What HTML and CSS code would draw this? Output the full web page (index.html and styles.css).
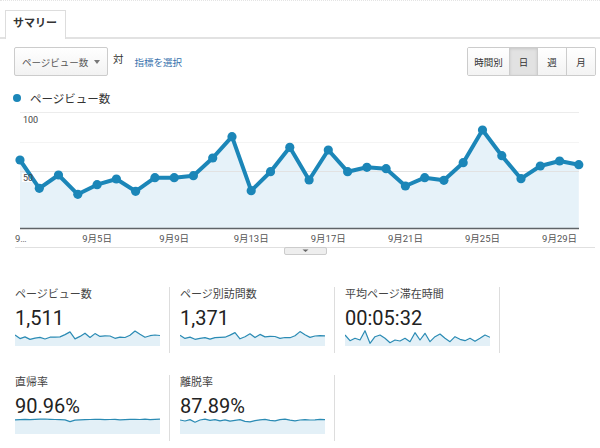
FILE: index.html
```html
<!DOCTYPE html>
<html lang="ja">
<head>
  <meta charset="UTF-8">
  <title>サマリー</title>
  <link rel="stylesheet" href="styles.css">
</head>
<body>
  <div class="tabs">
    <div class="tab">サマリー</div>
  </div>

  <div class="toolbar">
    <div class="metric-select">ページビュー数<span class="caret"></span></div>
    <span class="versus">対</span>
    <a class="pick-metric" href="#">指標を選択</a>
    <div class="period-group">
      <button class="hourly">時間別</button><button class="active">日</button><button>週</button><button>月</button>
    </div>
  </div>

  <div class="legend"><span class="dot"></span>ページビュー数</div>

  <!-- main chart, drawn in page coordinates through the viewBox -->
  <svg class="chart" width="600" height="152" viewBox="0 106 600 152">
    <defs>
      <marker id="pt" markerUnits="userSpaceOnUse" markerWidth="12" markerHeight="12" refX="6" refY="6">
        <circle cx="6" cy="6" r="4.6" fill="#1b86b8"/>
      </marker>
    </defs>
    <line class="grid" x1="20" y1="112.5" x2="579" y2="112.5"/>
    <line class="grid light" x1="20" y1="142.5" x2="579" y2="142.5"/>
    <polygon class="area" points="20,160 39.3,188.3 58.5,175 77.8,194.3 97.1,184.7 116.4,179 135.6,191.3 154.9,177.7 174.2,177.7 193.4,175.7 212.7,158 232,136.7 251.2,190.7 270.5,171.7 289.8,147.3 309.1,180 328.3,150 347.6,171.7 366.9,167.3 386.1,168.7 405.4,186 424.7,177.7 443.9,180.3 463.2,162.7 482.5,130 501.8,155.7 521,178.7 540.3,166 559.6,161 578.8,164.7 578.8,228 20,228"/>
    <line class="grid mid" x1="20" y1="171.5" x2="579" y2="171.5"/>
    <text class="axis-y" x="23" y="122.5">100</text>
    <rect x="22" y="173" width="12" height="9" fill="#fff" fill-opacity="0.85"/>
    <polyline class="line" marker-start="url(#pt)" marker-mid="url(#pt)" marker-end="url(#pt)" points="20,160 39.3,188.3 58.5,175 77.8,194.3 97.1,184.7 116.4,179 135.6,191.3 154.9,177.7 174.2,177.7 193.4,175.7 212.7,158 232,136.7 251.2,190.7 270.5,171.7 289.8,147.3 309.1,180 328.3,150 347.6,171.7 366.9,167.3 386.1,168.7 405.4,186 424.7,177.7 443.9,180.3 463.2,162.7 482.5,130 501.8,155.7 521,178.7 540.3,166 559.6,161 578.8,164.7"/>
    <text class="axis-y" x="23" y="180.5">50</text>
    <line class="axis" x1="20" y1="228.5" x2="579" y2="228.5"/>
    <text class="axis-x" x="15" y="241.5">9…</text>
    <text class="axis-x" x="97.1" y="241.5" text-anchor="middle">9月5日</text>
    <text class="axis-x" x="174.2" y="241.5" text-anchor="middle">9月9日</text>
    <text class="axis-x" x="251.2" y="241.5" text-anchor="middle">9月13日</text>
    <text class="axis-x" x="328.3" y="241.5" text-anchor="middle">9月17日</text>
    <text class="axis-x" x="405.4" y="241.5" text-anchor="middle">9月21日</text>
    <text class="axis-x" x="482.5" y="241.5" text-anchor="middle">9月25日</text>
    <text class="axis-x" x="559.6" y="241.5" text-anchor="middle">9月29日</text>
    <line class="foot" x1="15" y1="247.5" x2="595" y2="247.5"/>
    <!-- collapse handle -->
    <rect class="handle" x="284.5" y="247.5" width="42" height="7" rx="1.5"/>
    <polygon points="302.5,249.5 308.5,249.5 305.5,252" fill="#666"/>
  </svg>

  <div class="stats">
    <div class="stat">
      <div class="stat-name">ページビュー数</div>
      <div class="stat-value">1,511</div>
      <svg class="spark" viewBox="0 0 145 16">
        <polygon class="spark-area" points="0,4.9 5,8.6 10,6.9 15,9.4 20,8.1 25,7.4 30,9 35,7.2 40,7.2 45,6.9 50,4.6 55,1.9 60,8.9 65,6.4 70,3.2 75,7.5 80,3.6 85,6.4 90,5.8 95,6 100,8.3 105,7.2 110,7.5 115,5.3 120,1 125,4.3 130,7.3 135,5.7 140,5 145,5.5 145,16 0,16"/>
        <polyline class="spark-line" points="0,4.9 5,8.6 10,6.9 15,9.4 20,8.1 25,7.4 30,9 35,7.2 40,7.2 45,6.9 50,4.6 55,1.9 60,8.9 65,6.4 70,3.2 75,7.5 80,3.6 85,6.4 90,5.8 95,6 100,8.3 105,7.2 110,7.5 115,5.3 120,1 125,4.3 130,7.3 135,5.7 140,5 145,5.5"/>
      </svg>
    </div>
    <div class="stat">
      <div class="stat-name">ページ別訪問数</div>
      <div class="stat-value">1,371</div>
      <svg class="spark" viewBox="0 0 145 16">
        <polygon class="spark-area" points="0,5.2 5,8.4 10,7.1 15,9.3 20,8.3 25,7.6 30,9.1 35,7.6 40,7.4 45,7.2 50,5.1 55,2.6 60,8.8 65,6.8 70,3.8 75,7.6 80,4.4 85,6.9 90,6.3 95,6.5 100,8.4 105,7.5 110,7.7 115,5.8 120,1.6 125,4.8 130,7.4 135,6 140,5.6 145,5.8 145,16 0,16"/>
        <polyline class="spark-line" points="0,5.2 5,8.4 10,7.1 15,9.3 20,8.3 25,7.6 30,9.1 35,7.6 40,7.4 45,7.2 50,5.1 55,2.6 60,8.8 65,6.8 70,3.8 75,7.6 80,4.4 85,6.9 90,6.3 95,6.5 100,8.4 105,7.5 110,7.7 115,5.8 120,1.6 125,4.8 130,7.4 135,6 140,5.6 145,5.8"/>
      </svg>
    </div>
    <div class="stat">
      <div class="stat-name">平均ページ滞在時間</div>
      <div class="stat-value">00:05:32</div>
      <svg class="spark" viewBox="0 0 145 16">
        <polygon class="spark-area" points="0,5 5,10.7 10,8.3 15,10 20,0.7 25,13.3 30,6.7 35,5 40,8.3 45,12.7 50,10 55,11 60,8.3 65,11.7 70,2.7 75,10 80,3.3 85,11.7 90,6.7 95,4 100,8.3 105,11.7 110,6.7 115,9.3 120,10.7 125,8.3 130,11.3 135,8.3 140,5 145,7.3 145,16 0,16"/>
        <polyline class="spark-line" points="0,5 5,10.7 10,8.3 15,10 20,0.7 25,13.3 30,6.7 35,5 40,8.3 45,12.7 50,10 55,11 60,8.3 65,11.7 70,2.7 75,10 80,3.3 85,11.7 90,6.7 95,4 100,8.3 105,11.7 110,6.7 115,9.3 120,10.7 125,8.3 130,11.3 135,8.3 140,5 145,7.3"/>
      </svg>
    </div>
    <div class="stat">
      <div class="stat-name">直帰率</div>
      <div class="stat-value">90.96%</div>
      <svg class="spark" viewBox="0 0 145 16">
        <polygon class="spark-area" points="0,1.8 5,1.6 10,1.3 15,1.6 20,1.4 25,1.2 30,1 35,1.3 40,1.5 45,1.7 50,1.9 55,3.6 60,2.1 65,1.8 70,1.6 75,1.5 80,1.3 85,1.4 90,1.6 95,1.5 100,1.3 105,1.8 110,1.6 115,1.4 120,1.3 125,1.5 130,1.2 135,1.6 140,1.4 145,1.2 145,16 0,16"/>
        <polyline class="spark-line" points="0,1.8 5,1.6 10,1.3 15,1.6 20,1.4 25,1.2 30,1 35,1.3 40,1.5 45,1.7 50,1.9 55,3.6 60,2.1 65,1.8 70,1.6 75,1.5 80,1.3 85,1.4 90,1.6 95,1.5 100,1.3 105,1.8 110,1.6 115,1.4 120,1.3 125,1.5 130,1.2 135,1.6 140,1.4 145,1.2"/>
      </svg>
    </div>
    <div class="stat">
      <div class="stat-name">離脱率</div>
      <div class="stat-value">87.89%</div>
      <svg class="spark" viewBox="0 0 145 16">
        <polygon class="spark-area" points="0,2 5,3 10,1.6 15,4.2 20,2 25,1.2 30,2.4 35,1.6 40,2.8 45,1.8 50,3.2 55,2.4 60,1.6 65,3.4 70,3.8 75,2.6 80,1.8 85,1.4 90,2.4 95,2.8 100,1.6 105,1.2 110,2.2 115,2.8 120,2 125,1.6 130,2 135,1.8 140,1.4 145,1.6 145,16 0,16"/>
        <polyline class="spark-line" points="0,2 5,3 10,1.6 15,4.2 20,2 25,1.2 30,2.4 35,1.6 40,2.8 45,1.8 50,3.2 55,2.4 60,1.6 65,3.4 70,3.8 75,2.6 80,1.8 85,1.4 90,2.4 95,2.8 100,1.6 105,1.2 110,2.2 115,2.8 120,2 125,1.6 130,2 135,1.8 140,1.4 145,1.6"/>
      </svg>
    </div>
  </div>
</body>
</html>
```

FILE: styles.css
```css
* {
  box-sizing: border-box;
  margin: 0;
  padding: 0;
}
body {
  font-family: Roboto, "Noto Sans CJK JP", sans-serif;
  background: #fff;
  color: #333;
  width: 600px;
  border-top: 1px dotted #e4e4e4;
}

/* Tab strip */
.tabs {
  height: 38px;
  padding: 9px 0 0 5px;
  border-bottom: 2px solid #e2e2e2;
}
.tab {
  display: inline-block;
  height: 29px;
  padding: 0 8px 0 7px;
  line-height: 26px;
  font-size: 11px;
  font-weight: bold;
  color: #333;
  background: #fff;
  border: 1px solid #ddd;
  border-bottom: none;
}

/* Metric picker + period buttons */
.toolbar {
  display: flex;
  align-items: center;
  height: 29px;
  margin-top: 8px;
  padding: 0 4px 0 14px;
}
.metric-select {
  display: flex;
  align-items: center;
  justify-content: space-between;
  width: 94px;
  height: 29px;
  padding: 0 7px 0 7px;
  font-size: 9.5px;
  color: #555;
  background: linear-gradient(#fff, #f2f2f2);
  border: 1px solid #ccc;
  border-radius: 2px;
}
.caret {
  width: 0;
  height: 0;
  border-left: 3px solid transparent;
  border-right: 3px solid transparent;
  border-top: 4px solid #777;
}
.versus {
  margin: 0 0 6px 5px;
  font-size: 10.5px;
  color: #333;
}
.pick-metric {
  margin-left: 11px;
  font-size: 9.5px;
  color: #3872ad;
  text-decoration: none;
}
.period-group {
  display: flex;
  margin-left: auto;
  height: 29px;
  border: 1px solid #ccc;
  border-radius: 2px;
  overflow: hidden;
}
.period-group button {
  width: 29px;
  font-family: inherit;
  font-size: 9.5px;
  color: #333;
  background: linear-gradient(#fff, #f3f3f3);
  border: none;
  border-left: 1px solid #ccc;
}
.period-group .hourly {
  width: 41px;
  border-left: none;
}
.period-group .active {
  width: 28px;
  background: #e2e2e2;
  box-shadow: inset 0 1px 3px rgba(0, 0, 0, 0.12);
}

/* Legend */
.legend {
  display: flex;
  align-items: center;
  height: 16px;
  margin-top: 14px;
  padding-left: 13px;
  font-size: 11.5px;
  color: #333;
}
.dot {
  width: 8px;
  height: 8px;
  margin-right: 9px;
  border-radius: 50%;
  background: #1b86b8;
}

/* Main chart */
.chart {
  display: block;
}
.grid {
  stroke: #ececec;
  stroke-width: 1;
}
.grid.light {
  stroke: #f4f4f4;
}
.grid.mid {
  stroke: #e2e2e2;
}
.area {
  fill: #e6f2f9;
}
.line {
  fill: none;
  stroke: #1b86b8;
  stroke-width: 4;
  stroke-linejoin: round;
}
.axis {
  stroke: #5f6468;
  stroke-width: 1.5;
}
.axis-y {
  font-size: 9px;
  fill: #444;
}
.axis-x {
  font-size: 9.5px;
  fill: #555;
}
.foot {
  stroke: #e0e0e0;
  stroke-width: 1;
}
.handle {
  fill: #eee;
  stroke: #ccc;
  stroke-width: 1;
}

/* Scorecards */
.stats {
  display: grid;
  grid-template-columns: repeat(3, 165px);
  row-gap: 22px;
  margin-top: 29px;
  padding-left: 5px;
}
.stat {
  height: 66px;
  padding: 1px 9px 0 10px;
  border-right: 1px solid #ddd;
}
.stat-name {
  font-size: 11px;
  line-height: 14px;
  color: #444;
}
.stat-value {
  margin-top: 5px;
  font-size: 20px;
  line-height: 22px;
  color: #222;
}
.spark {
  display: block;
  width: 145px;
  height: 16px;
  margin-top: 1px;
}
.spark-area {
  fill: #e3f0f7;
}
.spark-line {
  fill: none;
  stroke: #2b8bb4;
  stroke-width: 1.2;
  stroke-linejoin: round;
}
```
